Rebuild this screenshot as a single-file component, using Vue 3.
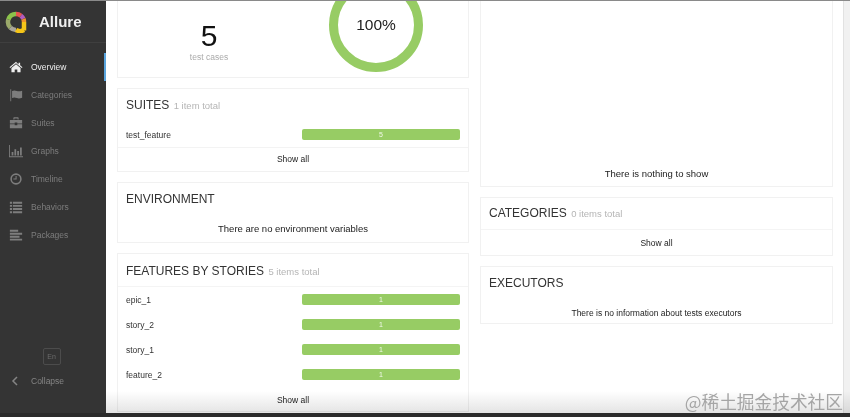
<script setup>
const navItems = [
  { label: 'Overview', icon: 'home', active: true },
  { label: 'Categories', icon: 'flag' },
  { label: 'Suites', icon: 'case' },
  { label: 'Graphs', icon: 'chart' },
  { label: 'Timeline', icon: 'clock' },
  { label: 'Behaviors', icon: 'list' },
  { label: 'Packages', icon: 'align' }
]
const stories = ['epic_1', 'story_2', 'story_1', 'feature_2']
</script>

<template>
  <div class="screen">
    <aside class="sidebar">
      <div class="brand">
        <svg class="logo" width="22" height="22" viewBox="0 0 22 22">
          <g fill="none" stroke-width="4.500">
            <path d="M11 3a8 8 0 0 0-7.600 5.500" stroke="#8bc34a" />
            <path d="M3.400 8.500a8 8 0 0 0 2 8.200" stroke="#9aa86a" />
            <path d="M5.400 16.700a8 8 0 0 0 5.600 2.300" stroke="#a9a59a" />
            <path d="M11 3a8 8 0 0 1 5 1.800" stroke="#e5554f" />
            <path d="M16 4.800a8 8 0 0 1 2.400 3" stroke="#b35bc0" />
            <path d="M18.400 7.800a8 8 0 0 1 .6 3.200" stroke="#f0932b" />
            <path d="M19 11v8.500" stroke="#f5c518" />
            <path d="M19 19a8 8 0 0 1-8 0" stroke="#f5c518" />
          </g>
        </svg>
        <span class="brand-name">Allure</span>
      </div>
      <nav class="nav">
        <div v-for="item in navItems" :key="item.label" class="nav-item" :class="{ active: item.active }">
          <svg class="nav-icon" width="16" height="16" viewBox="0 0 16 16" fill="currentColor">
            <template v-if="item.icon === 'home'">
              <path d="M8 2 .6 8.300l.8.900L8 3.700l6.600 5.500.8-.9-2.700-2.300V3h-1.800v2.200Z" />
              <path d="M8 4.900 2.800 9.200V14h3.700v-3.200h3V14h3.700V9.200Z" />
            </template>
            <template v-else-if="item.icon === 'flag'">
              <path d="M1.500 1.500h1v13.500h-1z" />
              <path d="M3.500 3.500c2-1 3.500-.8 5.500 0 1.800.6 3.500.4 6-.4v8c-2.500 1-4.200 1.100-6 .4-2-.8-3.500-1-5.500 0Z" />
            </template>
            <template v-else-if="item.icon === 'case'">
              <path d="M5 4V2.500C5 2 5.500 1.500 6 1.500h4c.5 0 1 .5 1 1V4h-1.200V2.800H6.200V4Z" />
              <path d="M1 4.500h14v4H9.500v-1h-3v1H1Z" />
              <path d="M1 9.500h5.500v1h3v-1H15V14H1Z" />
            </template>
            <template v-else-if="item.icon === 'chart'">
              <path d="M0 1h1v13h15v1H0Z" />
              <path d="M3 9h2v4H3zM6.200 6h2v7h-2zM9.400 8h2v5h-2zM12.600 4h2v9h-2z" />
            </template>
            <template v-else-if="item.icon === 'clock'">
              <path fill-rule="evenodd" d="M8 1.500a6.500 6.500 0 1 1 0 13 6.500 6.500 0 0 1 0-13Zm0 1.800a4.700 4.700 0 1 0 0 9.400 4.700 4.700 0 0 0 0-9.400Z" />
              <path d="M7.500 4.500h1.200v4.200H5v-1.200h2.500Z" />
            </template>
            <template v-else-if="item.icon === 'list'">
              <path d="M1 2h2.500v2.200H1zM4.500 2H15v2.200H4.500zM1 5.600h2.500v2.200H1zM4.500 5.600H15v2.200H4.500zM1 9.200h2.500v2.200H1zM4.500 9.200H15v2.200H4.500zM1 12.800h2.500V15H1zM4.500 12.800H15V15H4.500z" />
            </template>
            <template v-else>
              <path d="M1 2h9.500v2.200H1zM1 5.400h14v2.200H1zM1 8.800h11v2.200H1zM1 12.200h14v2.200H1z" />
            </template>
          </svg>
          <span>{{ item.label }}</span>
        </div>
      </nav>
      <div class="side-foot">
        <div class="lang">En</div>
        <div class="collapse">
          <svg width="8" height="10" viewBox="0 0 8 10" fill="none" stroke="currentColor" stroke-width="1.500">
            <path d="M6 1 2 5l4 4" />
          </svg>
          <span>Collapse</span>
        </div>
      </div>
    </aside>

    <main class="content">
      <div class="column">
        <section class="card summary">
          <div class="count">
            <div class="count-num">5</div>
            <div class="count-label">test cases</div>
          </div>
          <svg class="ring" width="96" height="72" viewBox="0 0 96 72">
            <circle cx="48" cy="24" r="42.500" fill="none" stroke="#97cc64" stroke-width="9" />
            <text x="48" y="29" text-anchor="middle" class="ring-text">100%</text>
          </svg>
        </section>

        <section class="card">
          <h2 class="card-title">SUITES <small>1 item total</small></h2>
          <div class="row">
            <span>test_feature</span>
            <div class="bar">5</div>
          </div>
          <div class="show-all">Show all</div>
        </section>

        <section class="card">
          <h2 class="card-title plain">ENVIRONMENT</h2>
          <div class="empty">There are no environment variables</div>
        </section>

        <section class="card">
          <h2 class="card-title features">FEATURES BY STORIES <small>5 items total</small></h2>
          <div v-for="name in stories" :key="name" class="row">
            <span>{{ name }}</span>
            <div class="bar">1</div>
          </div>
          <div class="show-all bare">Show all</div>
        </section>
      </div>

      <div class="column">
        <section class="card chart-card">
          <div class="nothing">There is nothing to show</div>
        </section>

        <section class="card">
          <h2 class="card-title categories">CATEGORIES <small>0 items total</small></h2>
          <div class="show-all bare tall">Show all</div>
        </section>

        <section class="card">
          <h2 class="card-title plain">EXECUTORS</h2>
          <div class="empty small">There is no information about tests executors</div>
        </section>
      </div>
    </main>

    <div class="scrollbar"></div>
    <div class="fade"></div>
    <div class="watermark">@稀土掘金技术社区</div>
  </div>
</template>

<style scoped>
.screen {
  position: relative;
  display: flex;
  width: 850px;
  height: 417px;
  overflow: hidden;
  background: #fff;
  border-top: 1px solid #8a8a8a;
  border-bottom: 4px solid #2b2b2b;
  box-sizing: border-box;
  font-family: "Liberation Sans", Arial, sans-serif;
  filter: blur(0.45px);
}

.sidebar {
  display: flex;
  flex-direction: column;
  flex: none;
  width: 106px;
  background: #343434;
  color: #7d7d7d;
}

.brand {
  display: flex;
  align-items: center;
  gap: 12px;
  height: 42px;
  padding-left: 5px;
  border-bottom: 1px solid #3f3f3f;
  box-sizing: border-box;
}

.logo {
  flex: none;
}

.brand-name {
  color: #f0f0f0;
  font-size: 15px;
  font-weight: 700;
}

.nav {
  margin-top: 10px;
}

.nav-item {
  display: flex;
  align-items: center;
  gap: 8px;
  height: 28px;
  padding-left: 9px;
  font-size: 8.500px;
}

.nav-item.active {
  color: #efefef;
  border-right: 2px solid #5aa5de;
}

.nav-icon {
  flex: none;
  width: 14px;
  height: 14px;
}

.side-foot {
  display: flex;
  flex-direction: column;
  align-items: center;
  margin-top: auto;
  padding-bottom: 22px;
}

.lang {
  width: 16px;
  height: 15px;
  border: 1px solid #4c4c4c;
  border-radius: 2px;
  margin-left: -3px;
  font-size: 7px;
  line-height: 15px;
  text-align: center;
  color: #6c6c6c;
}

.collapse {
  display: flex;
  align-items: center;
  gap: 12px;
  align-self: flex-start;
  height: 20px;
  margin-top: 6px;
  padding-left: 11px;
  font-size: 8.500px;
  color: #858585;
}

.content {
  display: flex;
  gap: 11px;
  align-items: flex-start;
  padding-left: 11px;
}

.column {
  display: flex;
  flex-direction: column;
  gap: 10px;
  width: 352px;
}

.column:last-child {
  width: 353px;
}

.card {
  border: 1px solid #f1f1f1;
  box-sizing: border-box;
  background: #fff;
}

.summary {
  display: flex;
  justify-content: space-between;
  height: 77px;
  border-top: none;
  padding: 0 44px 0 64px;
}

.count {
  width: 54px;
  text-align: center;
}

.count-num {
  margin-top: 20px;
  font-size: 30px;
  line-height: 30px;
  color: #111;
}

.count-label {
  margin-top: 1px;
  font-size: 8.500px;
  color: #aaa;
}

.ring-text {
  font-size: 15.500px;
  fill: #222;
}

.card-title {
  margin: 0;
  padding: 7px 8px 0;
  height: 33px;
  box-sizing: border-box;
  font-size: 12px;
  line-height: 18px;
  font-weight: 400;
  color: #333;
}

.card-title small {
  margin-left: 1px;
  font-size: 9.500px;
  color: #b5b5b5;
}

.card-title.plain {
  height: 31px;
}

.card-title.features {
  height: 33px;
  padding-top: 8px;
  border-bottom: 1px solid #f4f4f4;
}

.card-title.categories {
  height: 32px;
  padding-top: 6px;
  border-bottom: 1px solid #f4f4f4;
}

.row {
  display: flex;
  align-items: center;
  justify-content: space-between;
  height: 25px;
  padding: 0 8px;
  font-size: 8.500px;
  color: #333;
}

.bar {
  width: 158px;
  height: 11px;
  background: #97cc64;
  border-radius: 2px;
  color: #f2f8ea;
  font-size: 7px;
  line-height: 11px;
  text-align: center;
}

.show-all {
  height: 23px;
  border-top: 1px solid #f3f3f3;
  font-size: 8.500px;
  line-height: 22px;
  text-align: center;
  color: #222;
}

.show-all.bare {
  height: 24px;
  line-height: 26px;
  border-top: none;
}

.show-all.tall {
  height: 25px;
  line-height: 26px;
}

.empty {
  height: 28px;
  font-size: 9.500px;
  line-height: 30px;
  text-align: center;
  color: #222;
}

.empty.small {
  height: 25px;
  font-size: 8.500px;
  line-height: 30px;
}

.chart-card {
  display: flex;
  align-items: flex-end;
  justify-content: center;
  height: 186px;
  border-top: none;
}

.nothing {
  padding-bottom: 7px;
  font-size: 9.500px;
  color: #222;
}

.scrollbar {
  position: absolute;
  top: 0;
  right: 0;
  bottom: 0;
  width: 6px;
  background: #f1f1f1;
  border-left: 1px solid #e2e2e2;
}

.fade {
  position: absolute;
  left: 106px;
  right: 0;
  bottom: 0;
  height: 22px;
  background: linear-gradient(#fff, #e4e4e4);
  mix-blend-mode: multiply;
}

.watermark {
  position: absolute;
  right: 7px;
  bottom: 1px;
  font-family: "Noto Sans CJK SC", sans-serif;
  font-size: 17.700px;
  line-height: 22px;
  color: #a5a5a5;
}
</style>
